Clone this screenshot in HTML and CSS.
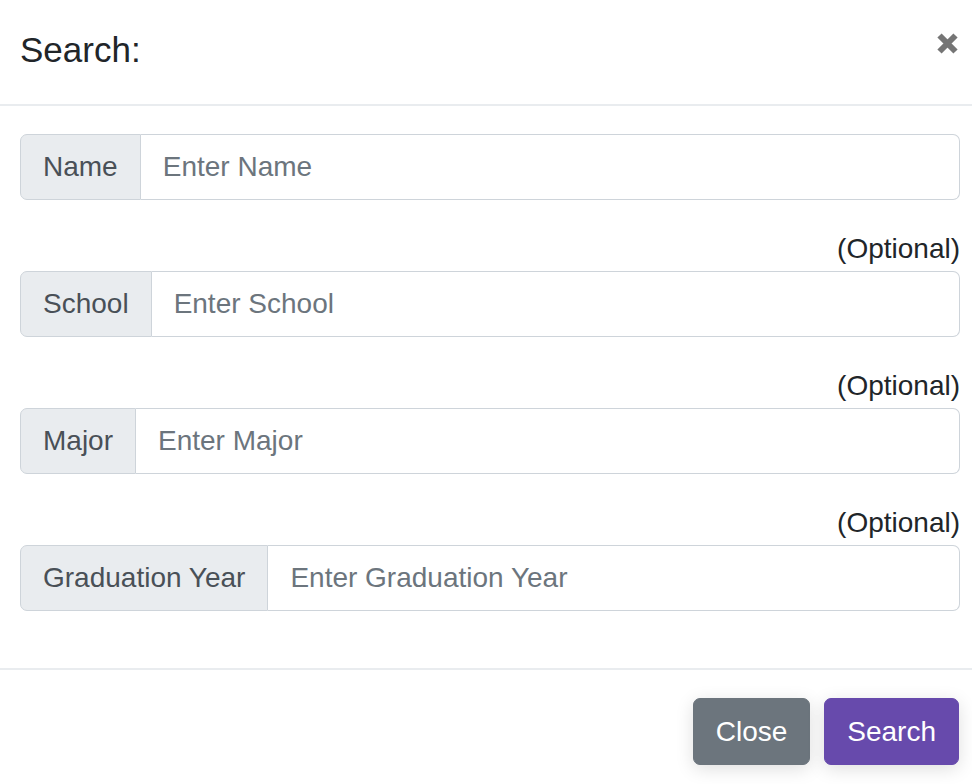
FILE: index.html
```html
<!DOCTYPE html>
<html lang="en">
<head>
<meta charset="utf-8">
<title>Search</title>
<link rel="stylesheet" href="styles.css">
</head>
<body>
<div class="modal">
  <div class="modal-header">
    <h5 class="modal-title">Search:</h5>
    <button class="close-x" type="button" aria-label="Close">
      <svg width="21" height="21" viewBox="0 0 21 21"><path d="M2.5 2.5L18.5 18.5M18.5 2.5L2.5 18.5" stroke="#757575" stroke-width="6" fill="none"/></svg>
    </button>
  </div>
  <div class="modal-body">
    <div class="input-group">
      <span class="addon">Name</span>
      <input class="field" type="text" placeholder="Enter Name">
    </div>
    <div class="optional">(Optional)</div>
    <div class="input-group">
      <span class="addon">School</span>
      <input class="field" type="text" placeholder="Enter School">
    </div>
    <div class="optional">(Optional)</div>
    <div class="input-group">
      <span class="addon">Major</span>
      <input class="field" type="text" placeholder="Enter Major">
    </div>
    <div class="optional">(Optional)</div>
    <div class="input-group">
      <span class="addon">Graduation Year</span>
      <input class="field" type="text" placeholder="Enter Graduation Year">
    </div>
  </div>
  <div class="modal-footer">
    <button class="btn btn-secondary" type="button">Close</button>
    <button class="btn btn-primary" type="button">Search</button>
  </div>
</div>
</body>
</html>
```
FILE: styles.css
```css
html, body {
  margin: 0;
  padding: 0;
  background: #ffffff;
}
body {
  font-family: "Liberation Sans", Arial, Helvetica, sans-serif;
  color: #212529;
  font-size: 28px;
}
.modal {
  width: 972px;
  overflow: hidden;
}
.modal-header {
  display: flex;
  justify-content: space-between;
  align-items: flex-start;
  height: 106px;
  box-sizing: border-box;
  padding: 24px 14px 28px 20px;
  border-bottom: 2px solid #e9ecef;
}
.modal-title {
  margin: 0;
  font-size: 35px;
  font-weight: 400;
  line-height: 52px;
  color: #212529;
}
.close-x {
  margin-top: 9px;
  padding: 0;
  border: 0;
  background: none;
  width: 21px;
  height: 21px;
  display: block;
  cursor: pointer;
}
.close-x svg {
  display: block;
}
.modal-body {
  padding: 28px 12px 57px 20px;
}
.input-group {
  display: flex;
  height: 66px;
}
.addon {
  display: flex;
  align-items: center;
  padding: 0 22px;
  background: #e9ecef;
  border: 1px solid #ced4da;
  border-radius: 7px 0 0 7px;
  color: #495057;
  font-size: 28px;
  white-space: nowrap;
}
.field {
  flex: 1;
  min-width: 0;
  margin: 0;
  padding: 0 22px;
  border: 1px solid #ced4da;
  border-left: 0;
  border-radius: 0 7px 7px 0;
  font-family: "Liberation Sans", Arial, Helvetica, sans-serif;
  font-size: 28px;
  color: #495057;
  background: #ffffff;
  outline: none;
}
.field::placeholder {
  color: #6c757d;
  opacity: 1;
}
.optional {
  text-align: right;
  margin: 28px 0 1px;
  height: 42px;
  line-height: 42px;
  font-size: 28px;
  color: #212529;
}
.modal-footer {
  display: flex;
  justify-content: flex-end;
  gap: 14px;
  border-top: 2px solid #e9ecef;
  padding: 28px 13px 20px 20px;
}
.btn {
  height: 67px;
  padding: 0 22px;
  border: 1px solid transparent;
  border-radius: 7px;
  font-family: "Liberation Sans", Arial, Helvetica, sans-serif;
  font-size: 28px;
  color: #ffffff;
  cursor: pointer;
  box-shadow: 0 4px 18px rgba(0, 0, 0, 0.13);
}
.btn-secondary {
  background: #6c757d;
  border-color: #6c757d;
}
.btn-primary {
  background: #674aac;
  border-color: #674aac;
}
```
